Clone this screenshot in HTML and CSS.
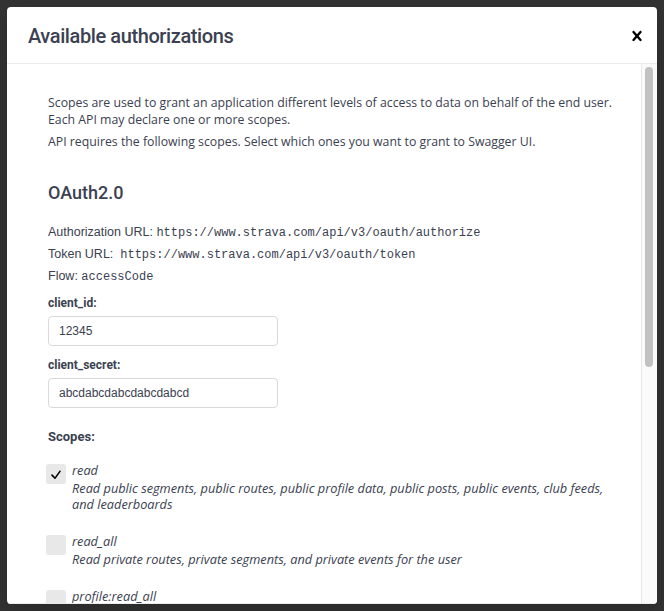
FILE: index.html
```html
<!DOCTYPE html>
<html>
<head>
<meta charset="utf-8">
<title>Available authorizations</title>
<link rel="stylesheet" href="styles.css">
</head>
<body>
<div class="modal">
  <div class="modal-header">
    <h3>Available authorizations</h3>
    <button class="close" aria-label="Close">
      <svg width="20" height="20" viewBox="0 0 20 20"><path d="M14.348 14.849c-.469.469-1.229.469-1.697 0L10 11.819l-2.651 3.029c-.469.469-1.229.469-1.697 0-.469-.469-.469-1.229 0-1.697l2.758-3.15-2.759-3.152c-.469-.469-.469-1.228 0-1.697.469-.469 1.228-.469 1.697 0L10 8.183l2.651-3.031c.469-.469 1.228-.469 1.697 0 .469.469.469 1.229 0 1.697l-2.758 3.152 2.758 3.150c.469.469.469 1.229 0 1.698z"/></svg>
    </button>
  </div>
  <div class="modal-body">
    <div class="modal-content">
      <div class="auth-container">
        <p class="intro">Scopes are used to grant an application different levels of access to data on behalf of the end user. Each API may declare one or more scopes.</p>
        <p class="intro">API requires the following scopes. Select which ones you want to grant to Swagger UI.</p>
        <h4>OAuth2.0</h4>
        <p class="meta">Authorization URL: <code>https://www.strava.com/api/v3/oauth/authorize</code></p>
        <p class="meta">Token URL:&nbsp; <code>https://www.strava.com/api/v3/oauth/token</code></p>
        <p class="meta">Flow: <code>accessCode</code></p>
        <div class="field">
          <label for="client_id">client_id:</label>
          <input id="client_id" type="text" value="12345">
        </div>
        <div class="field">
          <label for="client_secret">client_secret:</label>
          <input id="client_secret" type="text" value="abcdabcdabcdabcdabcd">
        </div>
        <h2 class="scopes-title">Scopes:</h2>
        <div class="scopes">
          <div class="scope">
            <span class="box"><svg width="10" height="9" viewBox="0 0 16 15"><path d="M6.333 15C5.966 15 5.632 14.863 5.41 14.625L.375 9.438C-.125 8.913-.125 8.081.375 7.558c.5-.521 1.333-.521 1.833 0l4.125 4.25L13.79 1.08c.5-.527 1.334-.527 1.834 0 .5.52.5 1.354 0 1.876L7.25 14.625C7.033 14.863 6.7 15 6.333 15z"/></svg></span>
            <div class="scope-text"><p class="name">read</p><p class="desc">Read public segments, public routes, public profile data, public posts, public events, club feeds, and leaderboards</p></div>
          </div>
          <div class="scope">
            <span class="box"></span>
            <div class="scope-text"><p class="name">read_all</p><p class="desc">Read private routes, private segments, and private events for the user</p></div>
          </div>
          <div class="scope">
            <span class="box"></span>
            <div class="scope-text"><p class="name">profile:read_all</p></div>
          </div>
        </div>
      </div>
    </div>
    <div class="scrollbar"><div class="thumb"></div></div>
  </div>
</div>
</body>
</html>
```
FILE: styles.css
```css
* { box-sizing: border-box; }
html, body { margin: 0; height: 100%; }
body {
  background: #333333;
  padding: 7px 0 0 7px;
  font-family: "Open Sans", sans-serif;
  color: #3b4151;
  overflow: hidden;
}
.modal {
  width: 650px;
  background: #fff;
  border-radius: 4px;
  overflow: hidden;
  box-shadow: 0 10px 30px rgba(0, 0, 0, 0.2);
}
.modal-header {
  display: flex;
  align-items: center;
  padding: 13px 0 11px;
  border-bottom: 1px solid #ebebeb;
}
.modal-header h3 {
  flex: 1;
  margin: 0;
  padding: 0 20px 0 21px;
  font-family: Roboto, sans-serif;
  font-weight: 500;
  font-size: 20px;
  letter-spacing: -0.4px;
  line-height: 32px;
  color: #3b4151;
}
.close {
  border: 0;
  background: none;
  padding: 0 10px;
  display: flex;
  cursor: pointer;
}
.close svg { fill: #000; }
.modal-body {
  display: flex;
  height: 540px;
  border-bottom: 1px solid #ebebeb;
}
.modal-content {
  flex: 1;
  min-width: 0;
  overflow: hidden;
  padding: 20px 20px 0 20px;
}
.scrollbar {
  flex: none;
  width: 16px;
  background: #fafafa;
  border-left: 1px solid #e8e8e8;
  padding: 3px 4px 0 3px;
}
.thumb {
  height: 300px;
  background: #c1c1c1;
  border-radius: 4px;
}
.auth-container {
  padding: 10px 4px 10px 21px;
}
.intro {
  margin: 0 0 5px;
  font-size: 12.3px;
  line-height: 17px;
}
h4 {
  margin: 31px 0 19px;
  font-family: Roboto, sans-serif;
  font-weight: 500;
  font-size: 18px;
  line-height: 24px;
  color: #3b4151;
}
.meta {
  margin: 0 0 5px;
  font-family: "Liberation Sans", Arial, sans-serif;
  font-size: 12.5px;
  line-height: 17px;
}
.meta code {
  font-family: "Liberation Mono", monospace;
  font-size: 12px;
  line-height: 1;
}
.field label {
  display: block;
  margin: 10px 0 4px;
  font-family: Roboto, sans-serif;
  font-weight: 700;
  font-size: 12px;
  line-height: 17px;
}
.field + .field label { margin-top: 11px; }
.field input {
  display: block;
  width: 230px;
  height: 30px;
  margin: 0;
  padding: 8px 10px;
  border: 1px solid #d9d9d9;
  border-radius: 4px;
  font-family: "Liberation Sans", Arial, sans-serif;
  font-size: 12px;
  color: #3b4151;
  background: #fff;
}
.scopes-title {
  margin: 19px 0 15px;
  font-family: Roboto, sans-serif;
  font-weight: 700;
  font-size: 13px;
  line-height: 20px;
}
.scope {
  display: flex;
  align-items: flex-start;
  margin-bottom: 21px;
}
.box {
  flex: none;
  width: 16px;
  height: 16px;
  margin: 4px 8px 0 0;
  background: #e8e8e8;
  box-shadow: 0 0 0 2px #e8e8e8;
  border-radius: 1px;
  display: flex;
  align-items: center;
  justify-content: center;
}
.box svg { fill: #000; }
.scope-text p {
  margin: 0;
  font-style: italic;
  font-size: 12.75px;
}
.scope-text .name { line-height: 17px; }
.scope-text .desc { line-height: 16px; margin-top: 1px; }
```
